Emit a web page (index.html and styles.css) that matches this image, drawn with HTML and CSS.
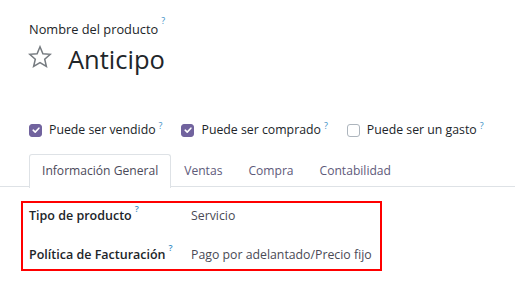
FILE: index.html
```html
<!DOCTYPE html>
<html lang="es">
<head>
<meta charset="utf-8">
<link rel="stylesheet" href="styles.css">
</head>
<body>
<div class="sheet">
  <div class="title-block">
    <div class="name-label">Nombre del producto<sup class="help">?</sup></div>
    <div class="title-row">
      <svg class="star" width="24" height="24" viewBox="0 0 24 24"><path d="M12 1.8 L14.9 8.7 L22.3 9.3 L16.7 14.2 L18.4 21.5 L12 17.6 L5.6 21.5 L7.3 14.2 L1.7 9.3 L9.1 8.7 Z" fill="none" stroke="#767b80" stroke-width="1.5" stroke-linejoin="miter"/></svg>
      <h1 class="title">Anticipo</h1>
    </div>
  </div>
  <div class="options">
    <label class="opt"><span class="cb on"><svg width="10" height="10" viewBox="0 0 10 10"><path d="M2.2 5.2 L4.2 7.1 L7.9 3.2" fill="none" stroke="#fff" stroke-width="1.6" stroke-linecap="round" stroke-linejoin="round"/></svg></span><span class="otext">Puede ser vendido<sup class="help">?</sup></span></label>
    <label class="opt"><span class="cb on"><svg width="10" height="10" viewBox="0 0 10 10"><path d="M2.2 5.2 L4.2 7.1 L7.9 3.2" fill="none" stroke="#fff" stroke-width="1.6" stroke-linecap="round" stroke-linejoin="round"/></svg></span><span class="otext">Puede ser comprado<sup class="help">?</sup></span></label>
    <label class="opt"><span class="cb"></span><span class="otext">Puede ser un gasto<sup class="help">?</sup></span></label>
  </div>
</div>
<div class="tabs">
  <div class="tab active">Información General</div>
  <div class="tab">Ventas</div>
  <div class="tab">Compra</div>
  <div class="tab">Contabilidad</div>
</div>
<div class="panel">
  <div class="fields">
    <div class="field"><div class="flabel">Tipo de producto<sup class="help">?</sup></div><div class="fvalue">Servicio</div></div>
    <div class="field"><div class="flabel">Política de Facturación<sup class="help">?</sup></div><div class="fvalue">Pago por adelantado/Precio fijo</div></div>
  </div>
</div>
</body>
</html>
```
FILE: styles.css
```css
html, body {
  margin: 0;
  padding: 0;
  background: #ffffff;
}
body {
  font-family: "Open Sans", "Noto Sans", sans-serif;
  font-size: 12px;
  color: #212529;
  width: 515px;
  height: 281px;
  overflow: hidden;
  white-space: nowrap;
}
.sheet {
  padding: 19px 0 0 29px;
}
.name-label {
  line-height: 20px;
  font-size: 12.8px;
  color: #212529;
}
.help {
  font-size: 9px;
  color: #3d8fc6;
  vertical-align: top;
  position: relative;
  top: -3px;
  margin-left: 3px;
  line-height: 1;
}
.title-row {
  display: flex;
  align-items: center;
  gap: 16px;
  margin-top: 1px;
  height: 38px;
}
.star {
  display: block;
  margin-left: -1px;
  margin-top: -4px;
  flex-shrink: 0;
}
.title {
  margin: 0;
  font-weight: 400;
  font-size: 25.5px;
  line-height: 34px;
  color: #212529;
}
.options {
  display: flex;
  gap: 19px;
  margin-top: 42px;
  align-items: center;
  height: 20px;
}
.opt {
  display: flex;
  align-items: center;
  gap: 7px;
  color: #212529;
  flex-shrink: 0;
}
.otext {
  font-size: 12.3px;
  line-height: 20px;
}
.opt .help { top: 0; vertical-align: 5px; }
.cb {
  width: 13px;
  height: 13px;
  border-radius: 3px;
  box-sizing: border-box;
  border: 1px solid #adb5bd;
  display: flex;
  align-items: center;
  justify-content: center;
  background: #fff;
  flex-shrink: 0;
}
.cb.on {
  background: #71639e;
  border-color: #71639e;
}
.cb svg { display: block; }
.tabs {
  display: flex;
  margin-top: 14px;
  padding-left: 29px;
  border-bottom: 1px solid #dee2e6;
  height: 32px;
}
.tab {
  padding: 0 12px;
  line-height: 32px;
  font-size: 12.1px;
  color: #5e5a7a;
  border: 1px solid transparent;
  border-bottom: none;
  border-radius: 3px 3px 0 0;
}
.tab.active {
  border-color: #dee2e6;
  background: #fff;
  color: #4b4a5a;
  margin-bottom: -1px;
  height: 33px;
}
.panel {
  padding: 14px 0 0 21px;
}
.fields {
  width: 357px;
  height: 66px;
  border: 2px solid #ff0000;
  display: flex;
  flex-direction: column;
  gap: 15px;
}
.field {
  display: flex;
  align-items: center;
  height: 24px;
}
.flabel {
  width: 162px;
  padding-left: 6px;
  font-weight: 600;
  font-size: 12.5px;
  color: #212529;
}
.fvalue {
  color: #4a4a55;
  font-size: 12.3px;
}
```
